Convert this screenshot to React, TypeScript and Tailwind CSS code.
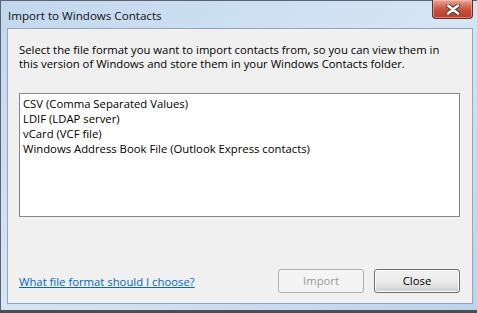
const formats = [
  'CSV (Comma Separated Values)',
  'LDIF (LDAP server)',
  'vCard (VCF file)',
  'Windows Address Book File (Outlook Express contacts)',
]

function CloseGlyph() {
  return (
    <svg width="14" height="11" viewBox="0 0 14 11" aria-hidden="true">
      <path
        d="M2 1.5 L7 5.5 L12 1.5 M2 9.5 L7 5.5 L12 9.5"
        fill="none"
        stroke="#3a3a3a"
        strokeWidth="4.2"
        strokeLinecap="round"
      />
      <path
        d="M2 1.5 L7 5.5 L12 1.5 M2 9.5 L7 5.5 L12 9.5"
        fill="none"
        stroke="#ffffff"
        strokeWidth="2.4"
        strokeLinecap="round"
      />
    </svg>
  )
}

export default function App() {
  return (
    <div
      className="w-[477px] h-[313px] overflow-hidden bg-[#4b4f54] text-[11.3px] text-black"
      style={{ fontFamily: '"Open Sans", "Noto Sans", sans-serif' }}
    >
      {/* window frame */}
      <div className="flex h-[310px] flex-col border-t border-l border-[#5b6470] bg-gradient-to-br from-[#c2d7ee] via-[#d6e5f5] to-[#bcd3ec] pr-[4px] pl-[6px] pb-[6px]">
        {/* title bar */}
        <div className="flex h-[27px] items-start justify-between">
          <div className="pt-[7px] pl-[1px] text-[11.6px] leading-[15px] text-[#101010]">Import to Windows Contacts</div>
          <button className="flex h-[19px] w-[41px] -mt-px items-center justify-center rounded-b-[4px] border border-t-0 border-[#6b2a20] bg-gradient-to-b from-[#e9a898] via-[#c9543f] to-[#b63c2a] shadow-[inset_0_0_0_1px_rgba(255,200,190,0.5)]">
            <CloseGlyph />
          </button>
        </div>

        {/* client area */}
        <div className="flex flex-1 flex-col border border-[#97a6ba] bg-[#f0f0f0] pt-[14px] pr-[12px] pb-[10px] pl-[11px]">
          <p className="leading-[14px]">
            Select the file format you want to import contacts from, so you can view them in this version of
            Windows and store them in your Windows Contacts folder.
          </p>

          <ul className="mt-[22px] h-[124px] border border-[#828790] bg-white pt-[2px] pl-[3px]">
            {formats.map((f) => (
              <li key={f} className="leading-[15px]">
                {f}
              </li>
            ))}
          </ul>

          <div className="mt-auto flex items-center justify-between">
            <a href="#" className="pt-[3px] text-[#0066cc] underline">
              What file format should I choose?
            </a>
            <div className="flex gap-[10px]">
              <button
                disabled
                className="h-[24px] w-[86px] rounded-[3px] border border-[#adb2b5] bg-[#f4f4f4] text-[#9a9a9a]"
              >
                Import
              </button>
              <button className="h-[24px] w-[86px] rounded-[3px] border border-[#707070] bg-gradient-to-b from-[#f2f2f2] via-[#ebebeb] to-[#d0d0d0] shadow-[inset_0_0_0_1px_#fcfcfc]">
                Close
              </button>
            </div>
          </div>
        </div>
      </div>
    </div>
  )
}
